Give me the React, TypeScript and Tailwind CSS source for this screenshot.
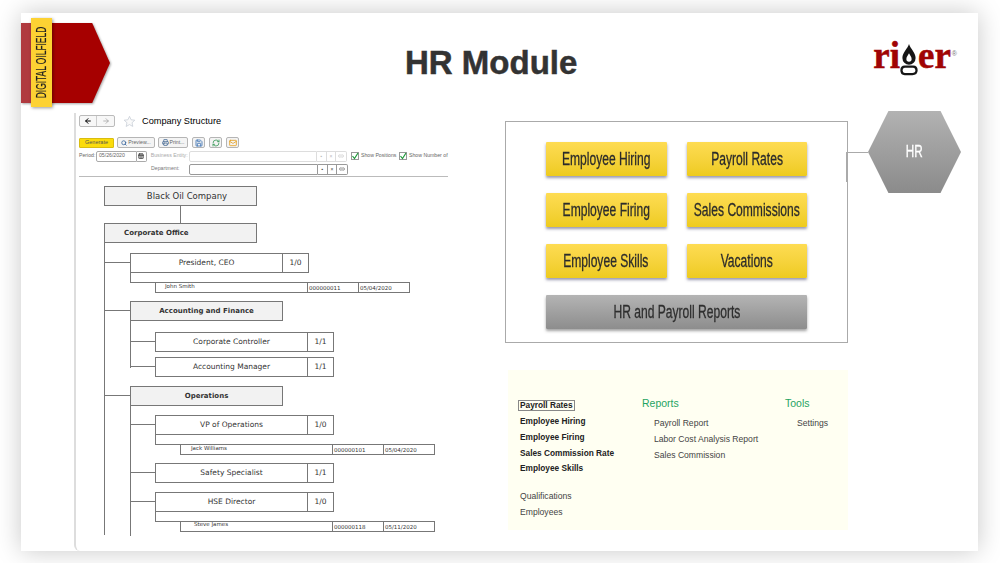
import React from "react";
import { ArrowLeft, ArrowRight, CalendarDays, Link2, Mail, Printer, RefreshCw, Save, Search } from "lucide-react";

const sans = "font-['Liberation_Sans',sans-serif]";
const line = "bg-[#777]";

// there is no condensed face installed, so squeeze the sans horizontally
const Condensed = ({ children }: { children: React.ReactNode }) => (
  <span className="inline-block whitespace-nowrap scale-x-[0.69] [-webkit-text-stroke:0.3px]">{children}</span>
);

const YellowButton = ({ label }: { label: string }) => (
  <div
    className={`h-[34px] flex items-center justify-center rounded-[1px] bg-gradient-to-b from-[#fedc52] to-[#eecb1d] shadow-[0_2px_3px_rgba(70,70,110,0.55)] text-[#2b2b2b] text-[17.5px] ${sans}`}
  >
    <Condensed>{label}</Condensed>
  </div>
);

const ToolButton = ({ className, children }: { className: string; children: React.ReactNode }) => (
  <div className={`h-[11px] flex items-center justify-center gap-[1px] rounded-[2px] border border-[#b5b5b5] bg-[#f4f4f4] text-[5.2px] text-[#666] ${className}`}>
    {children}
  </div>
);

// three little buttons after a lookup field
const LookupButtons = ({ dim }: { dim?: boolean }) => (
  <div className={`flex h-[11px] w-[30px] border border-l-0 rounded-r-[2px] text-[5px] leading-[9px] text-center ${dim ? "border-[#ddd] text-[#bbb]" : "border-[#999] text-[#444]"}`}>
    <span className={`w-[10px] border-r ${dim ? "border-[#ddd]" : "border-[#999]"}`}>▪</span>
    <span className={`w-[10px] border-r ${dim ? "border-[#ddd]" : "border-[#999]"}`}>×</span>
    <span className="w-[10px] flex items-center justify-center"><Link2 size={6} /></span>
  </div>
);

const Check = ({ label, width }: { label: string; width: string }) => (
  <div className={`flex items-center gap-[2px] shrink-0 ${width}`}>
    <svg width="8" height="8" viewBox="0 0 8 8" className="shrink-0">
      <rect x="0.5" y="0.5" width="7" height="7" fill="#fff" stroke="#999" />
      <path d="M1.500 4l2 2.500L7 1" fill="none" stroke="#1f9a3a" strokeWidth="1.200" />
    </svg>
    <span className="text-[5.2px] text-[#666] whitespace-nowrap">{label}</span>
  </div>
);

const Toolbar = () => (
  <div className={`w-[369px] mt-[1px] ${sans}`}>
    <div className="flex items-center h-[14px]">
      <div className="flex w-[36px] h-[12px] rounded-[2px] border border-[#bbb] bg-[#f7f7f7]">
        <span className="w-[17px] flex items-center justify-center border-r border-[#ccc] text-black"><ArrowLeft size={8} strokeWidth={3} /></span>
        <span className="flex-1 flex items-center justify-center text-[#999]"><ArrowRight size={8} strokeWidth={2} /></span>
      </div>
      <svg width="13" height="13" viewBox="0 0 24 24" className="ml-[8px]">
        <path d="M12 2.500l2.900 6.300 6.900.8-5.100 4.700 1.400 6.800-6.100-3.400-6.100 3.400 1.400-6.800L2.200 9.600l6.900-.8z" fill="#fafafa" stroke="#c9cfd8" strokeWidth="1.500" />
      </svg>
      <span className="ml-[6px] mt-[2px] text-[9.2px] text-black">Company Structure</span>
    </div>
    <div className="flex items-center gap-[3px] mt-[9px]">
      <div className="w-[35px] h-[10px] flex items-center justify-center rounded-[1px] bg-[#fbdc0c] border border-[#d9bd10] text-[5.5px] text-[#555]">Generate</div>
      <ToolButton className="w-[38px]"><Search size={6} strokeWidth={3} className="text-[#2f5f9a]" />Preview...</ToolButton>
      <ToolButton className="w-[30px]"><Printer size={7} strokeWidth={2.500} className="text-[#3f6590]" />Print...</ToolButton>
      <ToolButton className="w-[13px] ml-[1px] bg-[#e4ebf4]"><Save size={8} strokeWidth={2.500} className="text-[#3f74b5]" /></ToolButton>
      <ToolButton className="w-[13px] ml-[1px]"><RefreshCw size={8} strokeWidth={2.500} className="text-[#3d9b5c]" /></ToolButton>
      <ToolButton className="w-[13px] ml-[1px]"><Mail size={8} strokeWidth={2.500} className="text-[#e5a020]" /></ToolButton>
    </div>
    <div className="flex items-center mt-[2px] h-[12px] text-[5.2px]">
      <span className="w-[17px] text-[#666]">Period:</span>
      <div className="w-[41px] h-[11px] flex items-center pl-[2px] border border-[#aaa] rounded-l-[2px] text-[#666]">05/26/2020</div>
      <div className="w-[10px] h-[11px] flex items-center justify-center border border-l-0 border-[#aaa] rounded-r-[2px] text-[#333]">
        <CalendarDays size={6} strokeWidth={3} />
      </div>
      <span className="ml-[4px] w-[38px] text-[#aaa] whitespace-nowrap">Business Entity:</span>
      <div className="w-[129px] h-[11px] border border-[#ddd] rounded-l-[2px]" />
      <LookupButtons dim />
      <div className="flex ml-[4px]">
        <Check label="Show Positions" width="w-[48px]" />
        <Check label="Show Number of" width="w-[49px]" />
      </div>
    </div>
    <div className="flex items-center mt-[1px] h-[12px] text-[5.2px]">
      <span className="ml-[72px] w-[38px] text-[#777]">Department:</span>
      <div className="w-[129px] h-[11px] border border-[#999] rounded-l-[2px]" />
      <LookupButtons />
    </div>
    <div className="h-[1px] mt-[1px] bg-[#bbb]" />
  </div>
);

const Box = ({ label, bold, head, width = "w-[153px]", left, size = "text-[7.5px]" }: { label: string; bold?: boolean; head?: boolean; width?: string; left?: boolean; size?: string }) => (
  <div
    className={`${width} h-[20px] shrink-0 border border-[#777] flex items-center text-[#333] font-['DejaVu_Sans',sans-serif] ${size} ${left ? "pl-[19px]" : "justify-center"} ${head ? "bg-[#f2f2f2]" : "bg-white"} ${bold ? "font-bold text-[#111] pt-[1px]" : ""}`}
  >
    {label}
  </div>
);

// horizontal connector from the parent's vertical line to this row
const Branch = ({ children, className = "" }: { children: React.ReactNode; className?: string }) => (
  <div className={`relative ${className}`}>
    <span className={`absolute right-full top-[9px] w-[25px] h-px ${line}`} />
    {children}
  </div>
);

const Position = ({ label, count, mt = "" }: { label: string; count: string; mt?: string }) => (
  <Branch className={mt}>
    <div className="flex">
      <Box label={label} />
      <Box label={count} width="w-[27px] -ml-px" />
    </div>
  </Branch>
);

const Employee = ({ name, id, date, cell }: { name: string; id: string; date: string; cell: string }) => (
  <>
    <div className="w-[178px] h-[10px] border-l border-b border-[#777]" />
    <div className="flex ml-[25px] -mt-px h-[11px] text-[5.5px] text-[#333] font-['DejaVu_Sans',sans-serif]">
      <div className={`w-[153px] border border-t-0 border-[#777] whitespace-nowrap ${cell}`}>{name}</div>
      <div className="w-[52px] -ml-px border border-[#777] pl-[1px] leading-[10px]">{id}</div>
      <div className="w-[52px] -ml-px border border-[#777] pl-[1px] leading-[10px]">{date}</div>
    </div>
  </>
);

const OrgChart = () => (
  <div className="ml-[25px] mt-[9px] h-[350px] overflow-hidden">
    <div className="relative">
      <Box label="Black Oil Company" head size="text-[8.5px] pl-[13px]" />
    </div>
    <div className={`ml-[76px] w-px h-[17px] ${line}`} />
    <Box label="Corporate Office" head bold left size="text-[7px]" />
    <div className="flow-root border-l border-[#777] pl-[25px] h-[292px]">
      <Position label="President, CEO" count="1/0" mt="mt-[10px]" />
      <Employee name="John Smith" id="000000011" date="05/04/2020" cell="pl-[9px] leading-[8px]" />
      <Branch className="mt-[8px]">
        <Box label="Accounting and Finance" head bold size="text-[7px]" />
      </Branch>
      <div className="flow-root border-l border-[#777] pl-[24px] h-[47px]">
        <Position label="Corporate Controller" count="1/1" mt="mt-[11px]" />
        <Position label="Accounting Manager" count="1/1" mt="mt-[5px]" />
      </div>
      <Branch className="mt-[18px]">
        <Box label="Operations" head bold size="text-[7px]" />
      </Branch>
      <div className="flow-root border-l border-[#777] pl-[24px] h-[131px]">
        <Position label="VP of Operations" count="1/0" mt="mt-[9px]" />
        <Employee name="Jack Williams" id="000000101" date="05/04/2020" cell="pl-[10px] leading-[9px]" />
        <Position label="Safety Specialist" count="1/1" mt="mt-[8px]" />
        <Position label="HSE Director" count="1/0" mt="mt-[9px]" />
        <Employee name="Steve James" id="000000118" date="05/11/2020" cell="pl-[13px] leading-[7px]" />
      </div>
    </div>
  </div>
);

const HrPanel = () => (
  <div className="relative w-[343px] h-[222px] border border-[#aaa] pl-[40px] pr-[40px] pt-[20px]">
    <div className="grid grid-cols-2 gap-x-[20px] gap-y-[17px]">
      <YellowButton label="Employee Hiring" />
      <YellowButton label="Payroll Rates" />
      <YellowButton label="Employee Firing" />
      <YellowButton label="Sales Commissions" />
      <YellowButton label="Employee Skills" />
      <YellowButton label="Vacations" />
      <div className={`col-span-2 h-[34px] flex items-center justify-center rounded-[1px] bg-gradient-to-b from-[#b4b4b4] to-[#8d8d8d] shadow-[0_2px_3px_rgba(70,70,70,0.5)] text-[#2e2e2e] text-[17.5px] ${sans}`}>
        <Condensed>HR and Payroll Reports</Condensed>
      </div>
    </div>
    {/* hexagon and its connector hang off the right edge */}
    <span className="absolute left-full top-[30px] w-[21px] h-px bg-[#aaa]" />
    <span className="absolute -right-px top-[30px] w-[2px] h-[30px] bg-[#aaa]" />
    <div className="absolute left-[362px] -top-[11px] w-[93px] h-[82px] flex items-center justify-center [clip-path:polygon(22%_0,78%_0,100%_50%,78%_100%,22%_100%,0_50%)] bg-gradient-to-b from-[#b2b2b2] to-[#8b8b8b]">
      <span className={`text-white text-[17px] mt-[-1px] ${sans}`}><Condensed>HR</Condensed></span>
    </div>
  </div>
);

const MenuItem = ({ label, bold }: { label: string; bold?: boolean }) => (
  <div className={`h-[15.75px] leading-[16px] whitespace-nowrap ${bold ? "text-[8.300px] font-bold text-[#222]" : "text-[8.600px] text-[#444]"}`}>{label}</div>
);

const MenuPanel = () => (
  <div className={`w-[340px] h-[160px] mt-[27px] ml-[3px] bg-[#fffff2] flex ${sans}`}>
    <div className="w-[134px] pl-[12px] pt-[27px]">
      <div className="h-[16px] flex items-center">
        <span className="-ml-[2px] px-[1px] h-[11px] leading-[9px] border border-[#888] text-[8.300px] font-bold text-[#222]">Payroll Rates</span>
      </div>
      <MenuItem label="Employee Hiring" bold />
      <MenuItem label="Employee Firing" bold />
      <MenuItem label="Sales Commission Rate" bold />
      <MenuItem label="Employee Skills" bold />
      <div className="h-[12px]" />
      <MenuItem label="Qualifications" />
      <MenuItem label="Employees" />
    </div>
    <div className="w-[143px] pt-[26px]">
      <div className="text-[10.500px] h-[14px] leading-[14px] text-[#1fa463]">Reports</div>
      <div className="pl-[12px] pt-[5px]">
        <MenuItem label="Payroll Report" />
        <MenuItem label="Labor Cost Analysis Report" />
        <MenuItem label="Sales Commission" />
      </div>
    </div>
    <div className="pt-[26px]">
      <div className="text-[10.500px] h-[14px] leading-[14px] text-[#1fa463]">Tools</div>
      <div className="pl-[12px] pt-[5px]">
        <MenuItem label="Settings" />
      </div>
    </div>
  </div>
);

const Logo = () => (
  <div className="flex items-start font-['Liberation_Serif',serif] font-bold text-[#a00404] text-[37px] leading-none h-[40px] [-webkit-text-stroke:0.5px]">
    <span className="mt-[-5px]">ri</span>
    <svg width="18" height="33" viewBox="0 0 19 35" className="mt-[1px]">
      <path d="M9.500 1C11 6 16.500 10 16.500 16a7 7 0 0 1-14 0C2.500 10 8 6 9.500 1z" fill="#161616" />
      <path d="M9.500 11c.8 2 2.800 3.500 2.800 6a2.800 2.800 0 0 1-5.600 0c0-2.500 2-4 2.800-6z" fill="#fff" />
      <path d="M5 25h9c3 0 3.500 1.500 3.500 4S16 33 13 33H5c-3 0-3.500-1.500-3.500-4S2 25 5 25z" fill="none" stroke="#161616" strokeWidth="2.400" />
    </svg>
    <span className="mt-[-5px]">er</span>
    <span className={`mt-[8px] ml-[1px] text-[7px] font-normal text-[#777] [-webkit-text-stroke:0px] ${sans}`}>®</span>
  </div>
);

const Ribbon = () => (
  <div className="absolute left-0 top-[5px] w-[89px] h-[90px] flex items-center">
    <div className="drop-shadow-[1px_1px_1px_rgba(0,0,0,0.35)]">
      <div className="w-[89px] h-[80px] [clip-path:polygon(0_0,80%_0,100%_50%,80%_100%,0_100%)] bg-gradient-to-r from-[#b03a3f] from-[12%] to-[#a60000] to-[12%]" />
    </div>
    <div className="absolute left-[10px] top-0 w-[21px] h-[89px] flex items-center justify-center bg-[#fdd233] shadow-[1px_1px_3px_rgba(0,0,0,0.4)]">
      <span className={`[writing-mode:vertical-rl] rotate-180 text-[14px] text-[#222] whitespace-nowrap scale-y-[0.6] [-webkit-text-stroke:0.2px] ${sans}`}>DIGITAL OILFIELD</span>
    </div>
  </div>
);

export default function App() {
  return (
    <div className="w-[1000px] h-[563px] overflow-hidden bg-white pt-[13px] pl-[21px]">
      <div className="relative w-[957px] h-[538px] bg-white shadow-[0_0_24px_rgba(0,0,0,0.22)]">
        <Ribbon />
        <div className="h-[100px] flex items-center">
          <h1 className={`ml-[384px] mt-[-1px] text-[33px] font-bold text-[#333] whitespace-nowrap [-webkit-text-stroke:0.5px] ${sans}`}>HR Module</h1>
          <div className="ml-auto mr-[21px] mt-[-2px]">
            <Logo />
          </div>
        </div>
        <div className="flex">
          <div className="ml-[53px] w-[376px] h-[438px] border-l-2 border-[#ddd] rounded-bl-[6px] pl-[3px] overflow-hidden">
            <Toolbar />
            <OrgChart />
          </div>
          <div className="ml-[55px] mt-[8px]">
            <HrPanel />
            <MenuPanel />
          </div>
        </div>
      </div>
    </div>
  );
}
